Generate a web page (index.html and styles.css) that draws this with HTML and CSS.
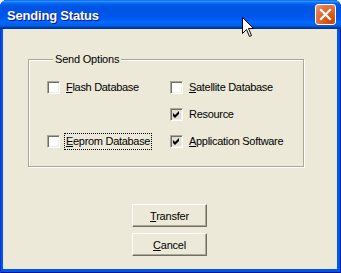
FILE: index.html
```html
<!DOCTYPE html>
<html>
	<head>
		<title>Sending Status</title>
		<link rel="stylesheet" href="styles.css">
	</head>
	<body>
		<div class="window">
			<div class="titlebar">
				<span class="title">Sending Status</span>
				<span class="close">
					<svg width="21" height="21" viewBox="0 0 21 21">
						<path d="M6 6 L15 15 M15 6 L6 15" stroke="#fff" stroke-width="2.2" stroke-linecap="square"/>
					</svg>
				</span>
			</div>
			<div class="client">
				<fieldset class="group">
					<legend>Send Options</legend>
					<div class="options">
						<label class="opt"><span class="box"></span><span class="text"><u>F</u>lash Database</span></label>
						<label class="opt"><span class="box"></span><span class="text"><u>S</u>atellite Database</span></label>
						<span></span>
						<label class="opt"><span class="box checked"><svg width="11" height="11" viewBox="0 0 11 11"><path d="M2 4 L4 6 L8 2 L8 5 L4 9 L2 7 Z" fill="#000"/></svg></span><span class="text">Resource</span></label>
						<label class="opt"><span class="box"></span><span class="text focus"><u>E</u>eprom Database</span></label>
						<label class="opt"><span class="box checked"><svg width="11" height="11" viewBox="0 0 11 11"><path d="M2 4 L4 6 L8 2 L8 5 L4 9 L2 7 Z" fill="#000"/></svg></span><span class="text"><u>A</u>pplication Software</span></label>
					</div>
				</fieldset>
				<div class="buttons">
					<button><u>T</u>ransfer</button>
					<button><u>C</u>ancel</button>
				</div>
			</div>
			<svg class="cursor" width="13" height="21" viewBox="0 0 13 21">
				<path d="M0.5 0.5 L0.5 16.5 L4.5 12.5 L7.5 19.5 L9.5 18.5 L6.5 11.5 L11.5 11.5 Z" fill="#fff" stroke="#000" stroke-width="1"/>
			</svg>
		</div>
	</body>
</html>
```

FILE: styles.css
```css
html, body {margin: 0px; padding: 0px; background: #fff;}
body {font-family: "Liberation Sans", Arial, sans-serif; font-size: 11px; color: #000;}

.window {position: relative; width: 341px; height: 273px; box-sizing: border-box; display: flex; flex-direction: column;
	background: #0055ea; border-radius: 7px 7px 0 0; overflow: hidden;
	box-shadow: inset 1px 0 #0831d9, inset -1px 0 #001ea0, inset 0 -1px #00138c;}

.titlebar {height: 29px; flex: none; display: flex; align-items: center; justify-content: space-between; padding: 0 5px 0 7px;
	background: linear-gradient(to bottom, #0058ee 0%, #3593ff 4%, #288eff 6%, #127dff 8%, #036ffc 10%, #0262ee 14%, #0057e5 20%, #0054e3 24%, #0055eb 56%, #005bf5 66%, #026afe 76%, #0062ef 86%, #0052d6 92%, #0040ab 94%, #003092 100%);}
.title {color: #fff; font-weight: bold; font-size: 13px; letter-spacing: -0.2px; text-shadow: 1px 1px #0f1089; padding-top: 1px;}
.close {width: 21px; height: 21px; box-sizing: border-box; border: 1px solid #fff; border-radius: 3px; display: block;
	background: radial-gradient(circle at 80% 85%, #cc4600 0%, #dc6527 45%, #e8794c 75%, #f1a080 100%);}
.close svg {display: block; margin: -1px;}

.client {flex: 1; margin: 0 4px 4px 3px; background: #ece9d8;}

.group {margin: 24px 33px 0 25px; width: 276px; height: 114px; box-sizing: border-box; padding: 13px 0 0 18px;
	border: 1px solid #aca899; box-shadow: inset 1px 1px #fff, 1px 1px #fff;}
.group legend {padding: 0 2px; margin-left: 6px; line-height: 13px; letter-spacing: -0.2px; background: #ece9d8;}

.options {display: grid; grid-template-columns: 123px 1fr; grid-auto-rows: 17px; row-gap: 10px;}
.opt {display: flex; align-items: center;}
.box {width: 13px; height: 13px; box-sizing: border-box; flex: none; margin-right: 6px; background: #fff;
	border: 1px solid; border-color: #aca899 #fff #fff #aca899; box-shadow: inset 1px 1px #716f64, inset -1px -1px #f1efe2;}
.box.checked {background: #e3e0d3;}
.box svg {display: block; margin: 0;}
.text {white-space: nowrap; line-height: 13px; letter-spacing: -0.3px;}
.text.focus {outline: 1px dotted #000; outline-offset: 1px;}

.buttons {display: flex; flex-direction: column; align-items: flex-start; gap: 6px; margin-top: 37px; padding-left: 129px;}
.buttons button {width: 75px; height: 23px; padding: 0; font: inherit; letter-spacing: -0.2px; color: #000; background: #ece9d8;
	border: 1px solid; border-color: #fff #716f64 #716f64 #fff; box-shadow: inset -1px -1px #aca899;}

.cursor {position: absolute; left: 242px; top: 17px;}
```
